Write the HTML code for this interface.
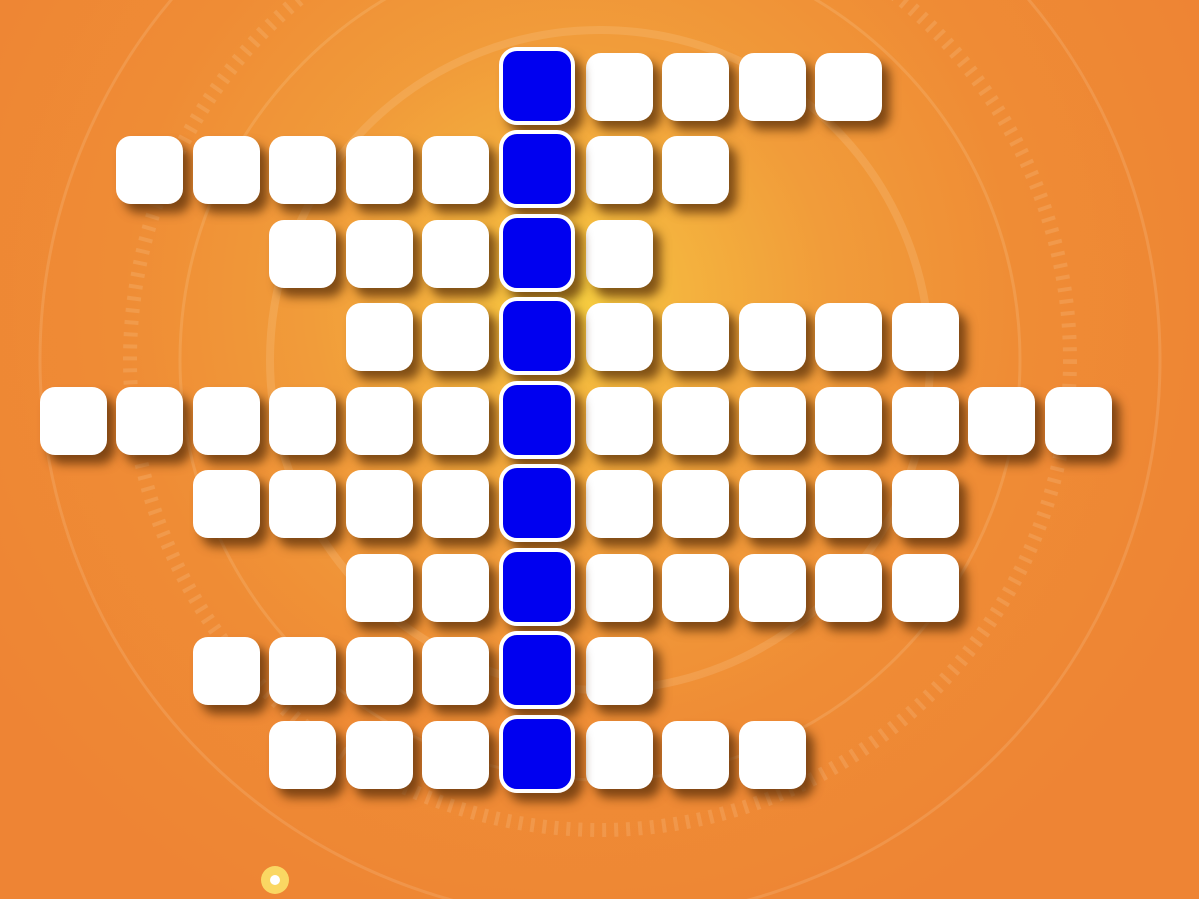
<!DOCTYPE html>
<html><head><meta charset="utf-8"><style>
html,body{margin:0;padding:0;width:1199px;height:899px;overflow:hidden}
body{position:relative;
background:radial-gradient(circle at 570px 300px,#f7d040 0px,#f4b33e 110px,#f19c3a 260px,#ef8c35 450px,#ee8434 700px);}
.w,.b{position:absolute;width:67px;height:68px;border-radius:15px;box-sizing:border-box}
.w{background:#fff;box-shadow:8px 9px 10px rgba(80,40,5,.7)}
.b{background:#0000f0;border:4px solid #fff;width:76px;height:78px;border-radius:18px;box-shadow:8px 9px 10px rgba(80,40,5,.7)}
svg{position:absolute;left:0;top:0}
</style></head><body>
<svg width="1199" height="899" viewBox="0 0 1199 899">
<g fill="none" stroke="rgba(255,235,200,0.15)">
<circle cx="600" cy="360" r="330" stroke-width="8"/>
<circle cx="600" cy="360" r="420" stroke-width="3"/>
<circle cx="600" cy="360" r="470" stroke-width="14" stroke-dasharray="4 8"/>
<circle cx="600" cy="360" r="560" stroke-width="3"/>
</g>
<circle cx="275" cy="880" r="14" fill="rgba(255,250,120,0.7)"/>
<circle cx="275" cy="880" r="5" fill="#fff"/>
</svg>
<div id="g"></div>
<script>
var cols=[40,116,193,269,346,422,499,586,662,739,815,892,968,1045];
var rows=[53,136,220,303,387,470,554,637,721];
var spec=[[[7,10]],[[1,5],[7,8]],[[3,5],[7,7]],[[4,5],[7,11]],[[0,5],[7,13]],[[2,5],[7,11]],[[4,5],[7,11]],[[2,5],[7,7]],[[3,5],[7,9]]];
var h='';
spec.forEach(function(r,i){
 r.forEach(function(s){for(var c=s[0];c<=s[1];c++)h+='<div class="w" style="left:'+cols[c]+'px;top:'+rows[i]+'px"></div>';});
 h+='<div class="b" style="left:499px;top:'+(rows[i]-6)+'px"></div>';
});
document.getElementById('g').innerHTML=h;
</script>
</body></html>
